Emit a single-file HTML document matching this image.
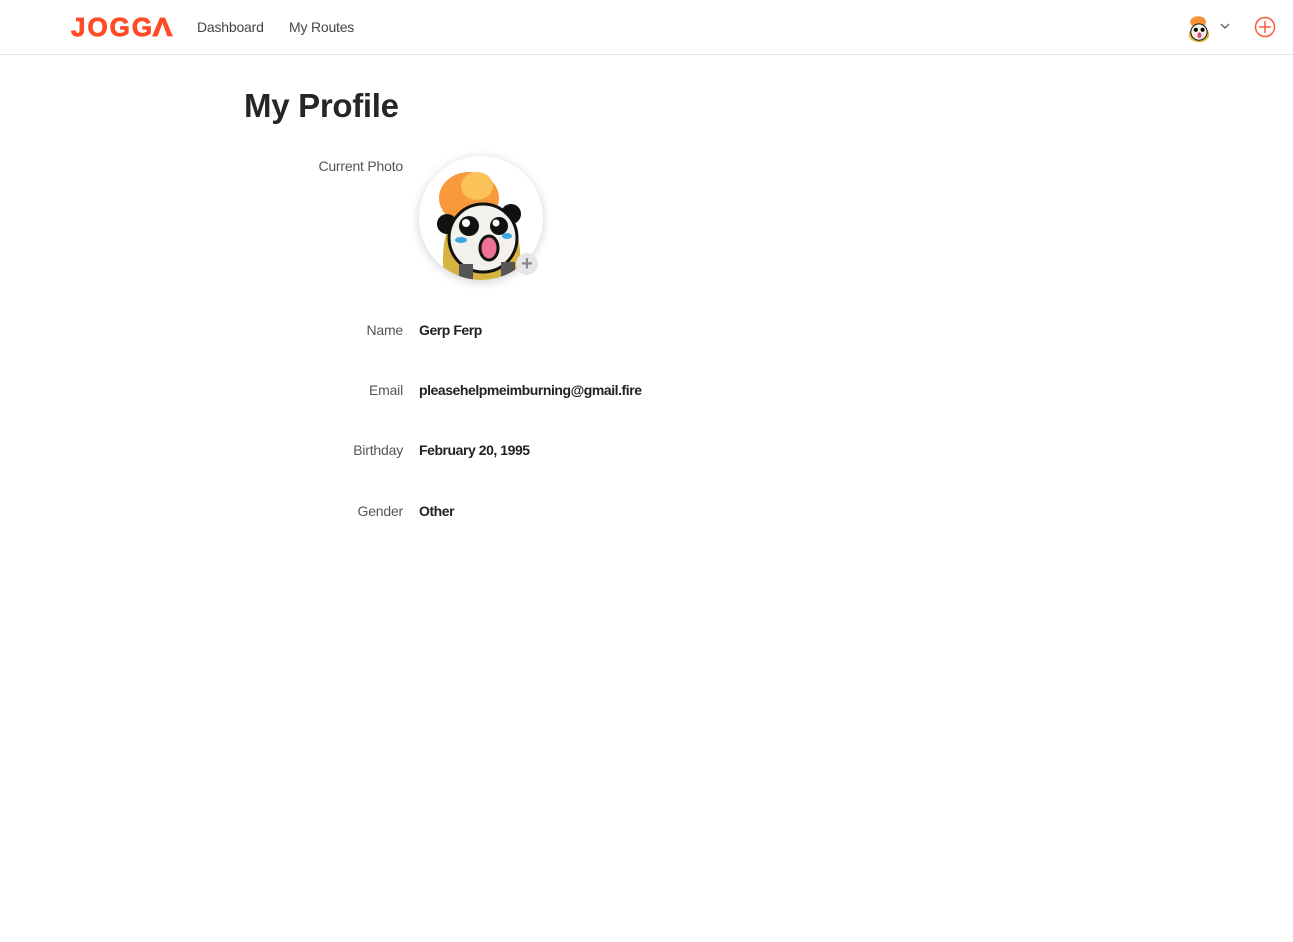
<!DOCTYPE html>
<html><head><meta charset="utf-8"><style>
*{margin:0;padding:0;box-sizing:border-box}
body{width:1293px;height:942px;background:#fff;font-family:"Liberation Sans",Roboto,sans-serif;color:#222;position:relative;overflow:hidden}
.nav{position:absolute;left:0;top:0;width:1293px;height:55px;border-bottom:1px solid #e2e2e2}
.logo{position:absolute;left:71px;top:12px;font-weight:900;font-size:26px;color:#ff4b26;letter-spacing:2px;-webkit-text-stroke:0.8px #ff4b26}
.nl{position:absolute;top:19px;font-size:14px;color:#444;letter-spacing:-0.2px}
h1{position:absolute;left:244px;top:87px;font-size:33px;font-weight:bold;color:#262626;letter-spacing:-0.3px}
.lab{position:absolute;right:890px;font-size:14px;color:#555;text-align:right;letter-spacing:-0.2px}
.val{position:absolute;left:419px;font-size:14px;font-weight:bold;color:#222;letter-spacing:-0.45px}
.av{position:absolute;left:419px;top:156px;width:124px;height:124px;border-radius:50%;background:#fff;box-shadow:0 2px 10px rgba(0,0,0,.18);overflow:hidden}
.plus{position:absolute;left:516px;top:253px;width:22px;height:22px;border-radius:50%;background:#e6e6e6;color:#888;font-size:20px;font-weight:bold;text-align:center;line-height:22px}
</style></head><body>
<div class="nav">
<div class="logo">JOGG<span style="display:inline-block;transform:scaleX(1.15)">Λ</span></div>
<div class="nl" style="left:197px">Dashboard</div>
<div class="nl" style="left:289px">My Routes</div>
<svg style="position:absolute;left:1185px;top:13px" width="28" height="30" viewBox="0 0 124 124">
<ellipse cx="58" cy="35" rx="35" ry="25" fill="#f7923a"/><ellipse cx="62" cy="90" rx="45" ry="35" fill="#d9b43a"/><circle cx="62" cy="80" r="36" fill="#f4f1ea" stroke="#000" stroke-width="4"/><circle cx="48" cy="70" r="9" fill="#000"/><circle cx="78" cy="70" r="9" fill="#000"/><ellipse cx="64" cy="94" rx="9" ry="13" fill="#e6457a"/></svg>
<svg style="position:absolute;left:1219px;top:22px" width="12" height="8"><path d="M2 2l4 4 4-4" stroke="#666" stroke-width="1.5" fill="none"/></svg>
<svg style="position:absolute;left:1254px;top:16px" width="22" height="22"><circle cx="11" cy="11" r="9.5" stroke="#ff5a36" stroke-width="1.5" fill="none"/><path d="M11 5v12M5 11h12" stroke="#ff5a36" stroke-width="1.5"/></svg>
</div>
<h1>My Profile</h1>
<div class="lab" style="top:158px">Current Photo</div>
<div class="av"><svg width="124" height="124" viewBox="0 0 124 124">
<ellipse cx="50" cy="42" rx="30" ry="26" fill="#f89a3c"/><ellipse cx="58" cy="30" rx="16" ry="14" fill="#fcc25a"/>
<path d="M25 124 Q20 70 40 60 L90 60 Q105 80 100 124Z" fill="#d6b23e"/>
<circle cx="28" cy="68" r="10" fill="#111"/><circle cx="92" cy="58" r="10" fill="#111"/>
<circle cx="64" cy="82" r="34" fill="#f3f1eb" stroke="#111" stroke-width="3"/>
<circle cx="50" cy="70" r="10" fill="#111"/><circle cx="80" cy="70" r="9" fill="#111"/><circle cx="47" cy="67" r="4" fill="#fff"/><circle cx="77" cy="67" r="3.5" fill="#fff"/>
<ellipse cx="42" cy="84" rx="6" ry="3" fill="#3aa7e0"/><ellipse cx="88" cy="80" rx="5" ry="3" fill="#3aa7e0"/>
<ellipse cx="70" cy="92" rx="9" ry="12" fill="#ef6f95" stroke="#111" stroke-width="3"/>
<rect x="40" y="108" width="14" height="16" fill="#555"/><rect x="82" y="106" width="14" height="16" fill="#555"/>
</svg></div>
<div class="plus">+</div>
<div class="lab" style="top:322px">Name</div><div class="val" style="top:322px">Gerp Ferp</div>
<div class="lab" style="top:382px">Email</div><div class="val" style="top:382px">pleasehelpmeimburning@gmail.fire</div>
<div class="lab" style="top:442px">Birthday</div><div class="val" style="top:442px">February 20, 1995</div>
<div class="lab" style="top:503px">Gender</div><div class="val" style="top:503px">Other</div>
</body></html>
